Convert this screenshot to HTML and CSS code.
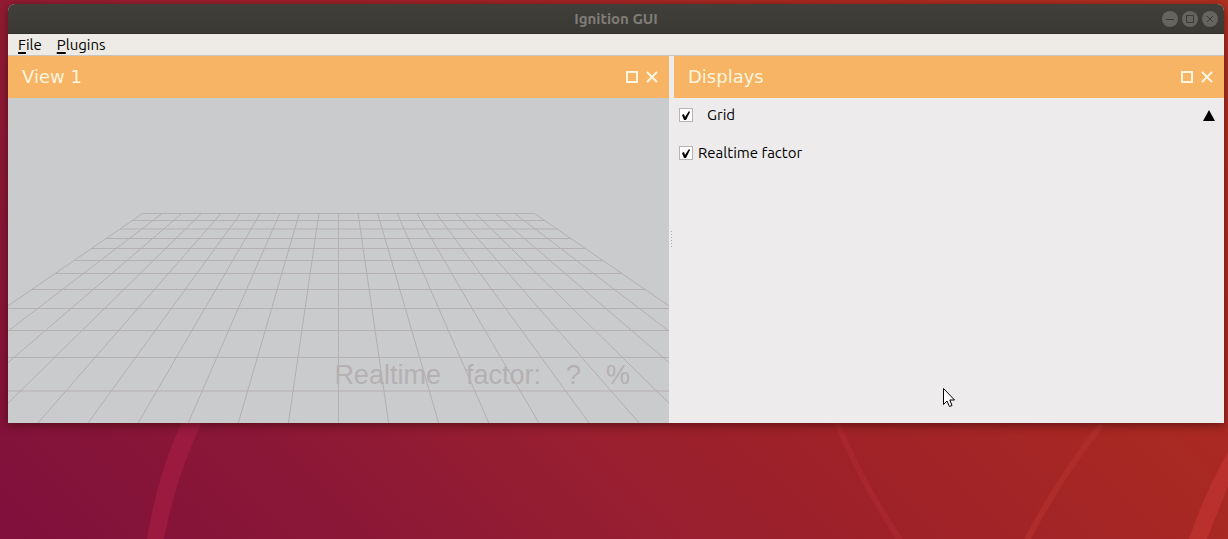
FILE: index.html
```html
<!DOCTYPE html>
<html lang="en">
<head>
<meta charset="utf-8">
<meta name="viewport" content="width=device-width, initial-scale=1">
<title>Ignition GUI</title>
<link rel="stylesheet" href="styles.css">
</head>
<body class="desktop">
<svg class="wallpaper" viewBox="0 0 1228 539" preserveAspectRatio="none" aria-hidden="true">
  <path d="M182 422H202Q176 476 164 539H147Q158 472 182 422Z" fill="#9c1a40"/>
  <path d="M837 422Q858 476 900 540" fill="none" stroke="#a8262d" stroke-width="6"/>
  <path d="M1102 424Q1058 480 1027 540" fill="none" stroke="#ae2d2a" stroke-width="6"/>
  <path d="M1228 452Q1204 494 1189 539H1207L1228 486Z" fill="#b9302d"/>
</svg>

<main class="window">
  <header class="titlebar">
    <h1 class="title">Ignition GUI</h1>
    <div class="window-buttons">
      <button class="round" aria-label="Minimize"><svg viewBox="0 0 16 16"><circle cx="8" cy="8" r="8"/><path d="M4 8.500H12"/></svg></button>
      <button class="round" aria-label="Maximize"><svg viewBox="0 0 16 16"><circle cx="8" cy="8" r="8"/><path d="M4.500 4.500H11.500V11.500H4.500Z"/></svg></button>
      <button class="round" aria-label="Close"><svg viewBox="0 0 16 16"><circle cx="8" cy="8" r="8"/><path d="M5 5L11 11M11 5L5 11"/></svg></button>
    </div>
  </header>

  <nav class="menubar">
    <button class="menu"><span class="key">F</span>ile</button>
    <button class="menu"><span class="key">P</span>lugins</button>
  </nav>

  <div class="panels">
    <section class="panel">
      <header class="panel-head">
        <h2 class="panel-title">View 1</h2>
        <button class="tool" aria-label="Float View 1"><svg viewBox="0 0 12 12"><path d="M1 1H11V11H1Z"/></svg></button>
        <button class="tool" aria-label="Close View 1"><svg viewBox="0 0 12 12"><path d="M1 1L11 11M11 1L1 11"/></svg></button>
      </header>
      <div class="scene">
        <svg class="grid" viewBox="0 0 661 325" aria-hidden="true">
          <path d="M134.500 115.500H526.500M124 122.500H537M112 131H549M98 140.500H563M83 150.500H578M67 162.500H594M47 175.500H614M23 191.500H638M0 210.500H661M0 232.500H661M0 259.500H661M0 293H661"/>
          <path d="M134.500 115.500L-170.500 325M154.100 115.500L-120.400 325M173.700 115.500L-70.300 325M193.300 115.500L-20.200 325M212.900 115.500L29.900 325M232.500 115.500L80 325M252.100 115.500L130.100 325M271.700 115.500L180.200 325M291.300 115.500L230.300 325M310.900 115.500L280.400 325M330.500 115.500V325M350.100 115.500L380.600 325M369.700 115.500L430.700 325M389.300 115.500L480.800 325M408.900 115.500L530.900 325M428.500 115.500L581 325M448.100 115.500L631.100 325M467.700 115.500L681.200 325M487.300 115.500L731.300 325M506.900 115.500L781.400 325M526.500 115.500L831.500 325"/>
        </svg>
        <p class="factor"><span>Realtime</span><span>factor:</span><span>?</span><span>%</span></p>
      </div>
    </section>

    <div class="splitter" role="separator" aria-orientation="vertical"><span class="grip"></span></div>

    <section class="panel">
      <header class="panel-head">
        <h2 class="panel-title">Displays</h2>
        <button class="tool" aria-label="Float Displays"><svg viewBox="0 0 12 12"><path d="M1 1H11V11H1Z"/></svg></button>
        <button class="tool" aria-label="Close Displays"><svg viewBox="0 0 12 12"><path d="M1 1L11 11M11 1L1 11"/></svg></button>
      </header>
      <div class="displays">
        <div class="row">
          <input class="check" type="checkbox" id="grid" checked>
          <label class="wide" for="grid">Grid</label>
          <button class="collapse" aria-label="Collapse Grid"><svg viewBox="0 0 12 12"><path d="M6 1L12 12H0Z"/></svg></button>
        </div>
        <div class="row">
          <input class="check" type="checkbox" id="realtime" checked>
          <label for="realtime">Realtime factor</label>
        </div>
        <svg class="pointer" viewBox="0 0 14 22" aria-hidden="true"><path d="M1.500 1.500V17.500L5 14L7.500 19.500L10 18.500L7.800 13H12.500Z"/></svg>
      </div>
    </section>
  </div>
</main>
</body>
</html>
```
FILE: styles.css
```css
* { box-sizing: border-box; }

.desktop {
  margin: 0;
  min-height: 100vh;
  padding: 4px 4px 0 8px;
  position: relative;
  overflow: hidden;
  background: linear-gradient(45deg, #80103c 0%, #8c1836 22%, #981f30 38%, #9e2129 50%, #a92922 73%, #b03120 100%);
  font-family: Ubuntu, "Noto Sans", sans-serif;
  font-size: 15px;
  line-height: 20px;
  color: #000;
}

.wallpaper {
  position: absolute;
  inset: 0;
  width: 100%;
  height: 100%;
}

button {
  border: 0;
  padding: 0;
  background: none;
  font: inherit;
  color: inherit;
}

svg { display: block; }

.window {
  position: relative;
  border-radius: 7px 7px 0 0;
  background: #edebeb;
  box-shadow: 0 2px 10px rgba(50, 10, 10, .6);
}

.titlebar {
  display: grid;
  grid-template-columns: 1fr auto 1fr;
  align-items: center;
  height: 30px;
  padding: 0 6px;
  border-radius: 7px 7px 0 0;
  border-bottom: 1px solid #302f2b;
  background: linear-gradient(#403f3a, #3a3934);
}

.title {
  grid-column: 2;
  margin: 0;
  font-size: 15px;
  font-weight: 700;
  color: #807d78;
}

.window-buttons {
  display: flex;
  justify-content: flex-end;
  gap: 4px;
}

.round { width: 16px; height: 16px; }
.round circle { fill: #65645d; }
.round path { fill: none; stroke: #3b3a35; }

.menubar {
  display: flex;
  gap: 15px;
  height: 22px;
  padding: 0 10px;
  background: #eeebe6;
  border-bottom: 1px solid #c9c4bd;
}

.key {
  text-decoration: underline;
  text-decoration-thickness: 2px;
  text-underline-offset: 2px;
}

.panels {
  display: grid;
  grid-template-columns: 661fr 5px 550fr;
}

.panel {
  min-width: 0;
  display: flex;
  flex-direction: column;
}

.panel-head {
  display: flex;
  align-items: center;
  gap: 8px;
  height: 42px;
  padding: 0 11px 0 14px;
  background: #f6b464;
  color: #fff5df;
}

.panel-title {
  flex: 1;
  margin: 0;
  font: 400 18px/24px "DejaVu Sans", sans-serif;
}

.tool { width: 12px; height: 12px; }
.tool path { fill: none; stroke: #fff5df; stroke-width: 2; }

.scene {
  position: relative;
  overflow: hidden;
  background: #cacbcd;
}

.grid { width: 100%; }
.grid path { fill: none; stroke: #b4afb0; }

.factor {
  position: absolute;
  right: 39px;
  bottom: 28px;
  display: flex;
  gap: 25px;
  margin: 0;
  font: 400 27px/40px "Liberation Sans", sans-serif;
  color: #b5b0b2;
}

.splitter {
  display: flex;
  align-items: center;
  justify-content: center;
  background: #edebeb;
}

.grip {
  width: 1px;
  height: 17px;
  background: repeating-linear-gradient(#aaa 0 1px, transparent 1px 3px);
}

.displays {
  flex: 1;
  position: relative;
  padding: 7px 9px 0 5px;
  display: flex;
  flex-direction: column;
  gap: 18px;
}

.row {
  display: flex;
  align-items: center;
  gap: 5px;
}

.wide { flex: 1; padding-left: 9px; }

.check {
  appearance: none;
  width: 14px;
  height: 14px;
  margin: 0;
  border: 1px solid #b6b3b0;
  background: #fff;
}

.check:checked::before {
  content: "";
  display: block;
  width: 12px;
  height: 12px;
  background: #000;
  clip-path: polygon(2px 6px, 4px 5px, 5px 8px, 9px 2px, 10px 3px, 6px 11px, 4px 11px);
}

.collapse { width: 12px; height: 12px; }

.pointer {
  position: absolute;
  left: 268px;
  bottom: 14px;
  width: 14px;
  height: 22px;
}

.pointer path { fill: #fff; stroke: #000; }
```
